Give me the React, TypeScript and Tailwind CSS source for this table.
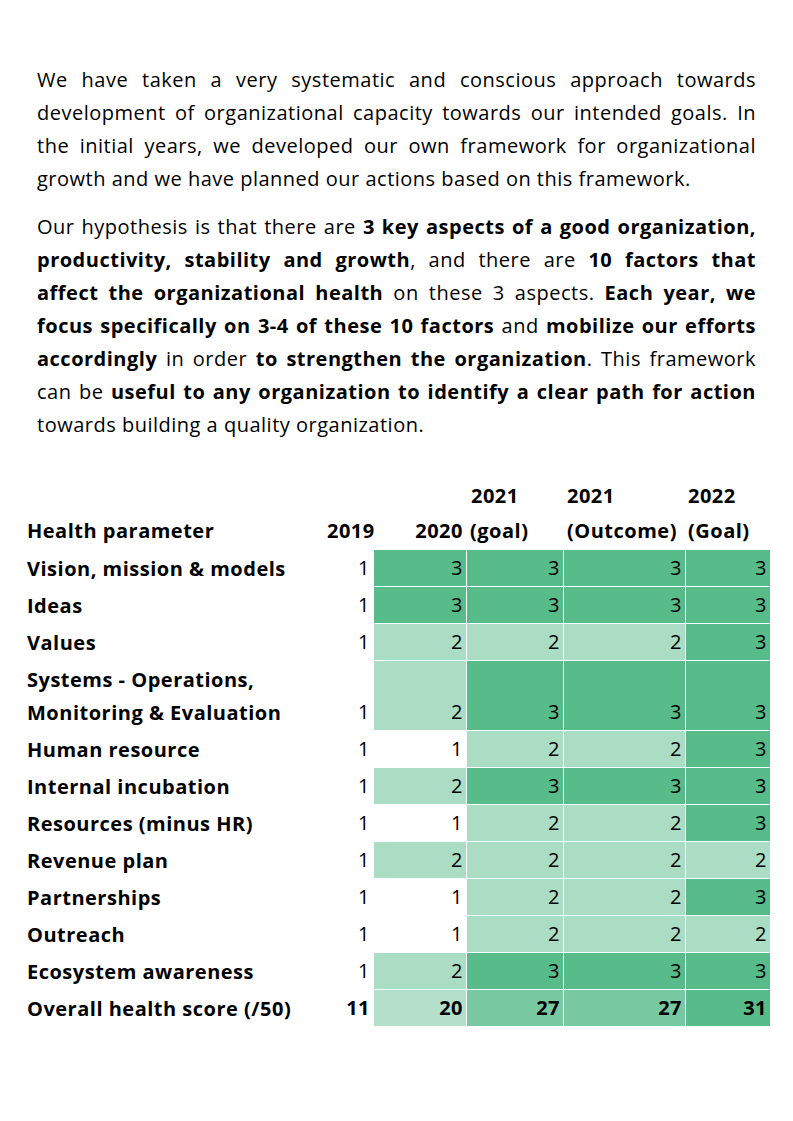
import React from 'react';

type Shade = 'dark' | 'light' | 'none' | 'pale' | 'mid';

const shadeClass: Record<Shade, string> = {
  dark: 'bg-[#57bb8a]',
  light: 'bg-[#abdcc4]',
  none: 'bg-white',
  pale: 'bg-[#b4e0cb]',
  mid: 'bg-[#78c8a1]',
};

const rows: { label: string[]; y2019: string; cells: [string, Shade][]; bold?: boolean }[] = [
  { label: ['Vision, mission & models'], y2019: '1', cells: [['3', 'dark'], ['3', 'dark'], ['3', 'dark'], ['3', 'dark']] },
  { label: ['Ideas'], y2019: '1', cells: [['3', 'dark'], ['3', 'dark'], ['3', 'dark'], ['3', 'dark']] },
  { label: ['Values'], y2019: '1', cells: [['2', 'light'], ['2', 'light'], ['2', 'light'], ['3', 'dark']] },
  { label: ['Systems - Operations,', 'Monitoring & Evaluation'], y2019: '1', cells: [['2', 'light'], ['3', 'dark'], ['3', 'dark'], ['3', 'dark']] },
  { label: ['Human resource'], y2019: '1', cells: [['1', 'none'], ['2', 'light'], ['2', 'light'], ['3', 'dark']] },
  { label: ['Internal incubation'], y2019: '1', cells: [['2', 'light'], ['3', 'dark'], ['3', 'dark'], ['3', 'dark']] },
  { label: ['Resources (minus HR)'], y2019: '1', cells: [['1', 'none'], ['2', 'light'], ['2', 'light'], ['3', 'dark']] },
  { label: ['Revenue plan'], y2019: '1', cells: [['2', 'light'], ['2', 'light'], ['2', 'light'], ['2', 'light']] },
  { label: ['Partnerships'], y2019: '1', cells: [['1', 'none'], ['2', 'light'], ['2', 'light'], ['3', 'dark']] },
  { label: ['Outreach'], y2019: '1', cells: [['1', 'none'], ['2', 'light'], ['2', 'light'], ['2', 'light']] },
  { label: ['Ecosystem awareness'], y2019: '1', cells: [['2', 'light'], ['3', 'dark'], ['3', 'dark'], ['3', 'dark']] },
  { label: ['Overall health score (/50)'], y2019: '11', cells: [['20', 'pale'], ['27', 'mid'], ['27', 'mid'], ['31', 'dark']], bold: true },
];

// one justified line of the paragraph
function Line({ children, last }: { children: React.ReactNode; last?: boolean }) {
  return (
    <div className={`whitespace-nowrap ${last ? 'text-left' : 'text-justify [text-align-last:justify]'}`}>
      {children}
    </div>
  );
}

export default function App() {
  return (
    <div className="w-[793px] min-h-[1121px] bg-white text-black font-['Open_Sans',sans-serif] tracking-[0.5px] pt-[63px]">
      <div className="px-[37px] text-[20px] leading-[33px]">
        <div>
          <Line>We have taken a very systematic and conscious approach towards</Line>
          <Line>development of organizational capacity towards our intended goals. In</Line>
          <Line>the initial years, we developed our own framework for organizational</Line>
          <Line last>growth and we have planned our actions based on this framework.</Line>
        </div>
        <div className="mt-[15px]">
          <Line>
            Our hypothesis is that there are <b>3 key aspects of a good organization,</b>
          </Line>
          <Line>
            <b>productivity, stability and growth</b>, and there are <b>10 factors that</b>
          </Line>
          <Line>
            <b>affect the organizational health</b> on these 3 aspects. <b>Each year, we</b>
          </Line>
          <Line>
            <b>focus specifically on 3-4 of these 10 factors</b> and <b>mobilize our efforts</b>
          </Line>
          <Line>
            <b>accordingly</b> in order <b>to strengthen the organization</b>. This framework
          </Line>
          <Line>
            can be <b>useful to any organization to identify a clear path for action</b>
          </Line>
          <Line last>towards building a quality organization.</Line>
        </div>
      </div>

      <div className="mt-[37px] pl-[27px] grid grid-cols-[299px_46px_92px_96px_121px_84px] gap-px text-[20px]">
        {/* header line 1 */}
        <div className="h-[34px]" />
        <div />
        <div />
        <div className="font-bold leading-[36px] h-[34px] pl-[4px]">2021</div>
        <div className="font-bold leading-[36px] h-[34px] pl-[3px]">2021</div>
        <div className="font-bold leading-[36px] h-[34px] pl-[2px]">2022</div>
        {/* header line 2 */}
        <div className="font-bold leading-[36px] h-[36px]">Health parameter</div>
        <div className="font-bold leading-[36px] text-right pr-[3px]">2019</div>
        <div className="font-bold leading-[36px] text-right pr-[3px]">2020</div>
        <div className="font-bold leading-[36px] pl-[3px]">(goal)</div>
        <div className="font-bold leading-[36px] pl-[3px]">(Outcome)</div>
        <div className="font-bold leading-[36px] pl-[2px]">(Goal)</div>

        {rows.map((r) => (
          <React.Fragment key={r.label.join(' ')}>
            <div className={`flex flex-col justify-end font-bold leading-[33px] pb-[1px] ${r.label.length > 1 ? 'h-[69px]' : 'h-[36px]'}`}>
              {r.label.map((l) => (
                <span key={l}>{l}</span>
              ))}
            </div>
            <div className={`flex items-end justify-end pr-[3px] leading-[36px] ${r.bold ? 'font-bold' : ''}`}>
              {r.y2019}
            </div>
            {r.cells.map(([v, s], i) => (
              <div
                key={i}
                className={`flex items-end justify-end pr-[3px] leading-[36px] ${shadeClass[s]} ${r.bold ? 'font-bold' : ''}`}
              >
                {v}
              </div>
            ))}
          </React.Fragment>
        ))}
      </div>
    </div>
  );
}
